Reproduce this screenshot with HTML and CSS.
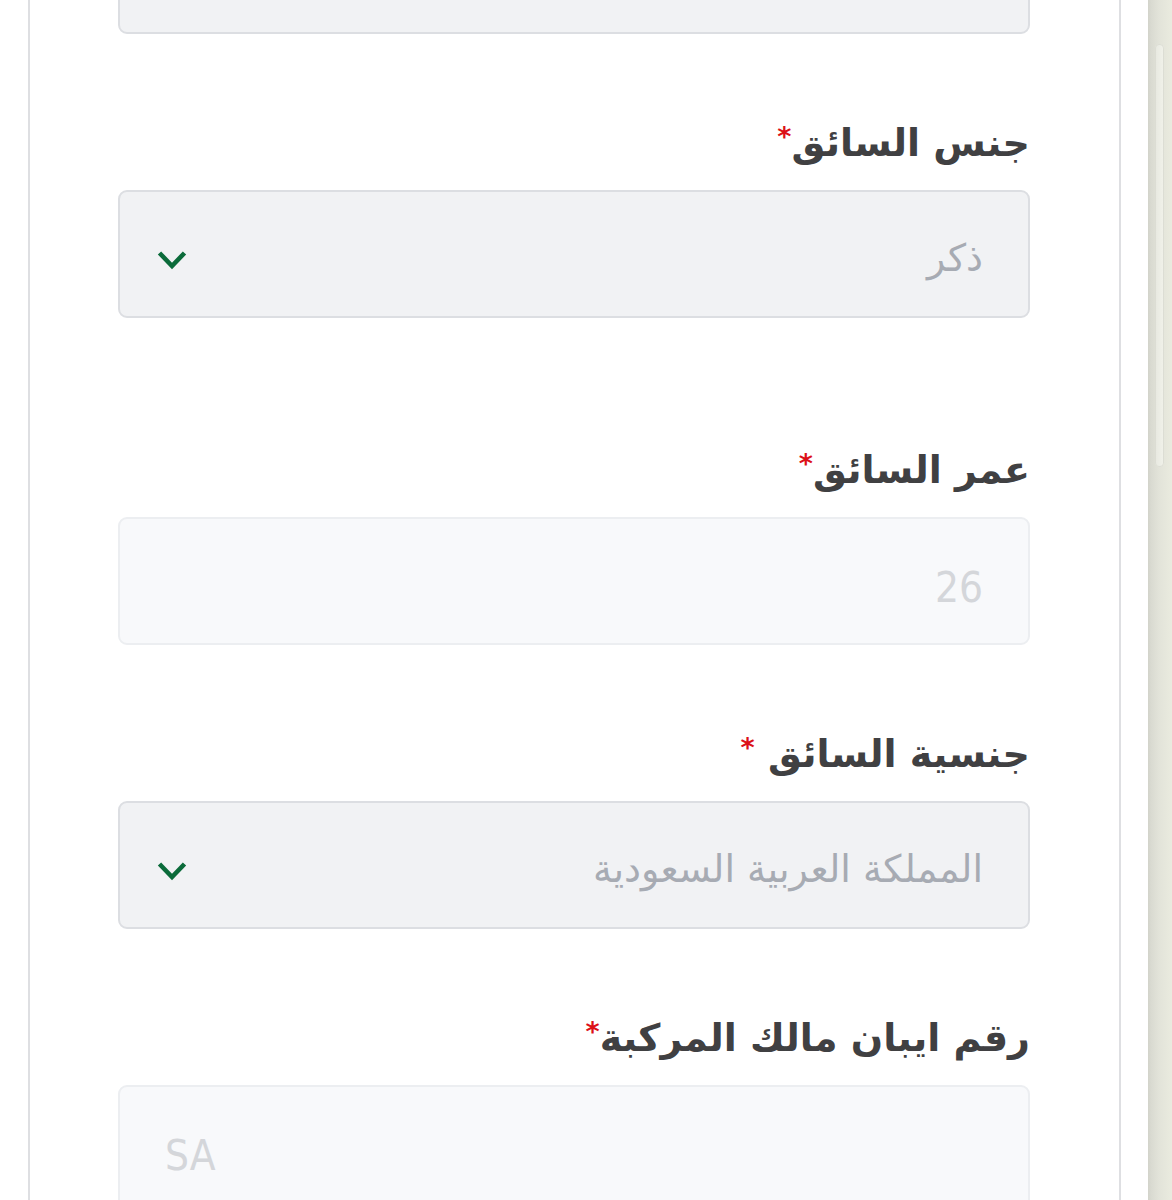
FILE: index.html
```html
<!DOCTYPE html>
<html lang="ar" dir="rtl">
<head>
<meta charset="utf-8">
<title>بيانات السائق</title>
<link rel="stylesheet" href="styles.css">
</head>
<body>
<div class="page">
  <main class="main">
    <div class="card">
      <div class="field">
        <div class="box box--select"></div>
      </div>

      <div class="field field--extra">
        <label class="label">جنس السائق<span class="req">*</span></label>
        <div class="box box--select">
          <span class="value">ذكر</span>
          <svg class="chev" width="30" height="20" viewBox="0 0 30 20"><path d="M2.5 3 L15 16 L27.5 3" fill="none" stroke="#0b6b3a" stroke-width="4.6" stroke-linecap="butt" stroke-linejoin="miter"/></svg>
        </div>
      </div>

      <div class="field">
        <label class="label">عمر السائق<span class="req">*</span></label>
        <div class="box box--input">
          <span class="value value--light value--latin">26</span>
        </div>
      </div>

      <div class="field">
        <label class="label">جنسية السائق <span class="req">*</span></label>
        <div class="box box--select">
          <span class="value">المملكة العربية السعودية</span>
          <svg class="chev" width="30" height="20" viewBox="0 0 30 20"><path d="M2.5 3 L15 16 L27.5 3" fill="none" stroke="#0b6b3a" stroke-width="4.6" stroke-linecap="butt" stroke-linejoin="miter"/></svg>
        </div>
      </div>

      <div class="field">
        <label class="label">رقم ايبان مالك المركبة<span class="req">*</span></label>
        <div class="box box--input box--ltr">
          <span class="value value--light value--latin">SA</span>
        </div>
      </div>
    </div>
  </main>
  <div class="scrollbar"><div class="thumb"></div></div>
</div>
</body>
</html>
```

FILE: styles.css
```css
html, body {
  margin: 0;
  padding: 0;
  height: 100%;
  overflow: hidden;
  background: #ffffff;
}

body {
  font-family: "DejaVu Sans", "Noto Sans", sans-serif;
  color: #3f3f41;
}

.page {
  display: flex;
  flex-direction: row;
  direction: ltr;
  height: 1200px;
}

.main {
  flex: 1 1 auto;
  min-width: 0;
  overflow: hidden;
}

.scrollbar {
  width: 24px;
  flex: 0 0 24px;
  height: 1200px;
  background-color: #dfe0d6;
  background-image: linear-gradient(to right, #d2d3ca 0, #d9dad1 3px, #e2e3d9 45%, #eaebdf 100%);
  padding-left: 7px;
  box-sizing: border-box;
}

.thumb {
  width: 9px;
  margin-top: 44px;
  height: 423px;
  border-radius: 5px;
  background: linear-gradient(to right, #e7e8e0, #f1f2ea);
  box-shadow: inset 0 0 0 1px #dcddd4;
}

.card {
  direction: rtl;
  margin-left: 28px;
  width: 1093px;
  box-sizing: border-box;
  border-left: 2px solid #dedfe2;
  border-right: 2px solid #dedfe2;
  padding: 0 89px 0 88px;
  margin-top: -94px;
}

.field {
  margin-bottom: 84px;
}

.field--extra {
  margin-bottom: 127px;
}

.label {
  display: block;
  font-weight: bold;
  font-size: 38px;
  line-height: 50px;
  height: 50px;
  margin-bottom: 22px;
  color: #404042;
  white-space: nowrap;
  position: relative;
  top: -6px;
}

.req {
  color: #dc1018;
  font-size: 27px;
  vertical-align: 10px;
}

.box {
  height: 128px;
  box-sizing: border-box;
  border-radius: 9px;
  display: flex;
  align-items: center;
  justify-content: space-between;
  padding: 0 45px 0 37px;
}

.box--select {
  background: #f1f2f4;
  border: 2px solid #dcdee2;
}

.box--input {
  background: #f8f9fb;
  border: 2px solid #eceef1;
}

.box--ltr {
  direction: ltr;
  padding: 0 45px 0 45px;
}

.value {
  font-size: 38px;
  color: #a7abb3;
  position: relative;
  top: 4px;
}

.value--latin {
  font-family: "Liberation Sans Narrow", "DejaVu Sans Condensed", "Liberation Sans", sans-serif;
  font-size: 42px;
  top: 6px;
}

.value--light {
  color: #d4d6da;
}

.chev {
  display: block;
  position: relative;
  top: 6px;
}
```
